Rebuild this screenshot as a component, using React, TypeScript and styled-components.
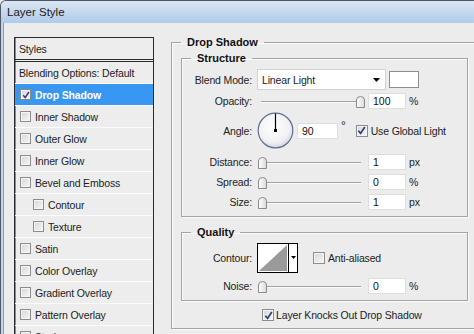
import styled, { createGlobalStyle } from 'styled-components'

const GlobalStyle = createGlobalStyle`
  html, body {
    margin: 0;
    padding: 0;
    overflow: hidden;
    background: #ececec;
  }
  body {
    font-family: 'Liberation Sans', Arial, sans-serif;
    font-size: 10.5px;
    letter-spacing: -0.15px;
    color: #1b1d22;
  }
`

const Window = styled.div`
  width: 474px;
  height: 334px;
  box-sizing: border-box;
  display: flex;
  flex-direction: column;
  overflow: hidden;
  background: #bfd4ee;
  border-top: 1px solid #505866;
  border-left: 1px solid #505866;
  border-top-left-radius: 6px;
`
const TitleBar = styled.div`
  height: 22px;
  flex-shrink: 0;
  display: flex;
  align-items: center;
  padding-left: 6px;
  font-size: 11.5px;
  letter-spacing: 0;
  color: #1a1a1a;
  background: linear-gradient(#dbe6f3, #b1cbea);
`
const Client = styled.div`
  flex: 1;
  min-height: 0;
  margin-left: 2px;
  display: flex;
  align-items: flex-start;
  background: #ececec;
  border-left: 1px solid #8e9db2;
`

/* left styles list */
const StylesPanel = styled.div`
  width: 140px;
  height: 330px;
  flex-shrink: 0;
  box-sizing: border-box;
  margin: 14px 0 0 10px;
  border: 1px solid #2b2b2b;
  box-shadow: inset 1px 0 0 #8a8a8a;
  background: #ededed;
`
const PanelHeader = styled.div`
  height: 21px;
  display: flex;
  align-items: center;
  padding-left: 4px;
  border-bottom: 3px double #2b2b2b;
`
const StyleRow = styled.div<{ $indent: number; $selected?: boolean }>`
  height: 21px;
  display: flex;
  align-items: center;
  gap: 4px;
  padding-left: ${(p) => p.$indent}px;
  border-bottom: 1px solid #fbfbfb;
  background: ${(p) => (p.$selected ? '#3797f1' : 'transparent')};
  color: ${(p) => (p.$selected ? '#ffffff' : 'inherit')};
  font-weight: ${(p) => (p.$selected ? 'bold' : 'normal')};
  white-space: nowrap;
`

const Box = styled.span<{ $size: number }>`
  width: ${(p) => p.$size}px;
  height: ${(p) => p.$size}px;
  flex-shrink: 0;
  box-sizing: border-box;
  display: inline-flex;
  align-items: center;
  justify-content: center;
  border: 1px solid #8c8c8c;
  background: linear-gradient(135deg, #d6d6d6, #f7f7f7);
  box-shadow: inset 0 0 0 1px #f4f4f4;
`

/* right settings */
const Settings = styled.div`
  flex-shrink: 0;
  margin: 12px 0 0 17px;
`
const Group = styled.fieldset<{ $width: number; $padTop?: number }>`
  margin: 0;
  min-width: 0;
  width: ${(p) => p.$width}px;
  box-sizing: border-box;
  padding: ${(p) => p.$padTop ?? 4}px 0 6px 9px;
  border: 1px solid #a4a4a4;
  box-shadow: inset 1px 1px 0 #fbfbfb, 1px 1px 0 #fbfbfb;
`
const SubGroup = styled(Group)<{ $top: number }>`
  margin-top: ${(p) => p.$top}px;
`
const Legend = styled.legend`
  padding: 0 6px;
  font-size: 11px;
  line-height: 14px;
  font-weight: bold;
  letter-spacing: 0;
  color: #111;
`
const FieldRow = styled.div<{ $h: number; $top?: number }>`
  display: grid;
  grid-template-columns: 61px auto;
  column-gap: 5px;
  align-items: center;
  height: ${(p) => p.$h}px;
  margin-top: ${(p) => p.$top ?? 0}px;
`
const Label = styled.span`
  text-align: right;
  white-space: nowrap;
`
const Controls = styled.div`
  display: flex;
  align-items: center;
`
const Select = styled.div`
  width: 129px;
  height: 21px;
  box-sizing: border-box;
  display: flex;
  align-items: center;
  justify-content: space-between;
  padding: 0 5px 0 4px;
  background: #fff;
  border: 1px solid #d2d2d2;
`
const Swatch = styled.div`
  width: 30px;
  height: 17px;
  margin-left: 3px;
  box-sizing: border-box;
  background: #fff;
  border: 1px solid #8e8e8e;
`
const NumberField = styled.input<{ $width: number; $left: number }>`
  width: ${(p) => p.$width}px;
  height: 16px;
  box-sizing: border-box;
  margin: 0 0 0 ${(p) => p.$left}px;
  padding: 0 0 0 4px;
  border: 1px solid #dedede;
  background: #fff;
  font: inherit;
  color: #111;
  outline: none;
`
const Unit = styled.span`
  margin-left: 3px;
`
const Track = styled.div`
  position: relative;
  width: 106px;
  height: 16px;
  margin-left: 1px;
  &::before {
    content: '';
    position: absolute;
    left: 3px;
    right: 3px;
    top: 8px;
    height: 1px;
    background: #a2a2a2;
    border-bottom: 1px solid #fafafa;
  }
`
const Thumb = styled.svg`
  position: absolute;
  top: 3px;
  display: block;
`
const CheckLabel = styled.label<{ $left: number }>`
  display: flex;
  align-items: center;
  gap: 3px;
  margin-left: ${(p) => p.$left}px;
  white-space: nowrap;
`
const Degree = styled.span`
  align-self: flex-start;
  margin: 8px 0 0 3px;
  font-size: 12px;
  line-height: 12px;
`
const KnockRow = styled.div`
  display: flex;
  align-items: center;
  gap: 2px;
  margin-top: 7px;
  padding-left: 81px;
  height: 14px;
  white-space: nowrap;
`

function Check({ size = 11, checked = false }: { size?: number; checked?: boolean }) {
  return (
    <Box $size={size}>
      {checked && (
        <svg width={size - 3} height={size - 3} viewBox="0 0 10 10">
          <path d="M1.5 5.2 L4 8.2 L8.7 1.2" fill="none" stroke="#2a3f86" strokeWidth="1.9" />
        </svg>
      )}
    </Box>
  )
}

function Slider({ value }: { value: number }) {
  return (
    <Track>
      <Thumb width="9" height="12" viewBox="0 0 9 12" style={{ left: (value / 100) * 98 }}>
        <defs>
          <linearGradient id="thumbFill" x1="0" y1="0" x2="1" y2="0">
            <stop offset="0" stopColor="#ffffff" />
            <stop offset="1" stopColor="#d9d9d9" />
          </linearGradient>
        </defs>
        <path d="M0.5 4 Q0.5 0.5 4.5 0.5 Q8.5 0.5 8.5 4 V11.5 H0.5 Z" fill="url(#thumbFill)" stroke="#8a8a8a" />
      </Thumb>
    </Track>
  )
}

function Dial() {
  return (
    <svg width="37" height="37" viewBox="0 0 37 37">
      <defs>
        <radialGradient id="dialFill" cx="0.45" cy="0.4" r="0.6">
          <stop offset="0" stopColor="#ffffff" />
          <stop offset="0.75" stopColor="#f1f1f3" />
          <stop offset="1" stopColor="#d4d7e0" />
        </radialGradient>
      </defs>
      <circle cx="18.5" cy="18.5" r="17.3" fill="url(#dialFill)" stroke="#5f6f92" strokeWidth="1.2" />
      <line x1="18.5" y1="1.5" x2="18.5" y2="18.5" stroke="#000" strokeWidth="1.2" />
      <rect x="17" y="17" width="3" height="3" fill="#000" />
    </svg>
  )
}

function ContourPicker() {
  return (
    <svg width="41" height="30" viewBox="0 0 41 30">
      <rect x="0.5" y="0.5" width="40" height="29" fill="#fff" stroke="#000" />
      <polygon points="2,28 30,2 30,28" fill="#9a9a9a" />
      <line x1="31.5" y1="1" x2="31.5" y2="29" stroke="#000" />
      <polygon points="34,13 39,13 36.5,16" fill="#000" />
    </svg>
  )
}

const styleItems: { name: string; indent?: boolean; checked?: boolean; selected?: boolean }[] = [
  { name: 'Drop Shadow', checked: true, selected: true },
  { name: 'Inner Shadow' },
  { name: 'Outer Glow' },
  { name: 'Inner Glow' },
  { name: 'Bevel and Emboss' },
  { name: 'Contour', indent: true },
  { name: 'Texture', indent: true },
  { name: 'Satin' },
  { name: 'Color Overlay' },
  { name: 'Gradient Overlay' },
  { name: 'Pattern Overlay' },
  { name: 'Stroke' },
]

const sliderRows = [
  { label: 'Distance:', value: '1', unit: 'px', top: 5 },
  { label: 'Spread:', value: '0', unit: '%', top: 4 },
  { label: 'Size:', value: '1', unit: 'px', top: 4 },
]

export default function App() {
  return (
    <>
      <GlobalStyle />
      <Window>
        <TitleBar>Layer Style</TitleBar>
        <Client>
          <StylesPanel>
            <PanelHeader>Styles</PanelHeader>
            <StyleRow $indent={4}>Blending Options: Default</StyleRow>
            {styleItems.map((item) => (
              <StyleRow key={item.name} $indent={item.indent ? 18 : 5} $selected={item.selected}>
                <Check checked={item.checked} />
                {item.name}
              </StyleRow>
            ))}
          </StylesPanel>

          <Settings>
            <Group $width={330} $padTop={0}>
              <Legend>Drop Shadow</Legend>
              <SubGroup $width={287} $top={2}>
                <Legend>Structure</Legend>
                <FieldRow $h={21}>
                  <Label>Blend Mode:</Label>
                  <Controls>
                    <Select>
                      <span>Linear Light</span>
                      <svg width="7" height="4" viewBox="0 0 7 4">
                        <polygon points="0,0 7,0 3.5,4" fill="#000" />
                      </svg>
                    </Select>
                    <Swatch />
                  </Controls>
                </FieldRow>
                <FieldRow $h={16} $top={3}>
                  <Label>Opacity:</Label>
                  <Controls>
                    <Slider value={100} />
                    <NumberField $width={38} $left={4} readOnly value="100" />
                    <Unit>%</Unit>
                  </Controls>
                </FieldRow>
                <FieldRow $h={37} $top={3}>
                  <Label>Angle:</Label>
                  <Controls>
                    <Dial />
                    <NumberField $width={41} $left={3} readOnly value="90" />
                    <Degree>°</Degree>
                    <CheckLabel $left={10}>
                      <Check size={12} checked />
                      Use Global Light
                    </CheckLabel>
                  </Controls>
                </FieldRow>
                {sliderRows.map((row) => (
                  <FieldRow key={row.label} $h={16} $top={row.top}>
                    <Label>{row.label}</Label>
                    <Controls>
                      <Slider value={0} />
                      <NumberField $width={38} $left={4} readOnly value={row.value} />
                      <Unit>{row.unit}</Unit>
                    </Controls>
                  </FieldRow>
                ))}
              </SubGroup>

              <SubGroup $width={287} $top={8}>
                <Legend>Quality</Legend>
                <FieldRow $h={30}>
                  <Label>Contour:</Label>
                  <Controls>
                    <ContourPicker />
                    <CheckLabel $left={15}>
                      <Check size={12} />
                      Anti-aliased
                    </CheckLabel>
                  </Controls>
                </FieldRow>
                <FieldRow $h={16} $top={5}>
                  <Label>Noise:</Label>
                  <Controls>
                    <Slider value={0} />
                    <NumberField $width={38} $left={4} readOnly value="0" />
                    <Unit>%</Unit>
                  </Controls>
                </FieldRow>
              </SubGroup>

              <KnockRow>
                <Check size={12} checked />
                Layer Knocks Out Drop Shadow
              </KnockRow>
            </Group>
          </Settings>
        </Client>
      </Window>
    </>
  )
}
